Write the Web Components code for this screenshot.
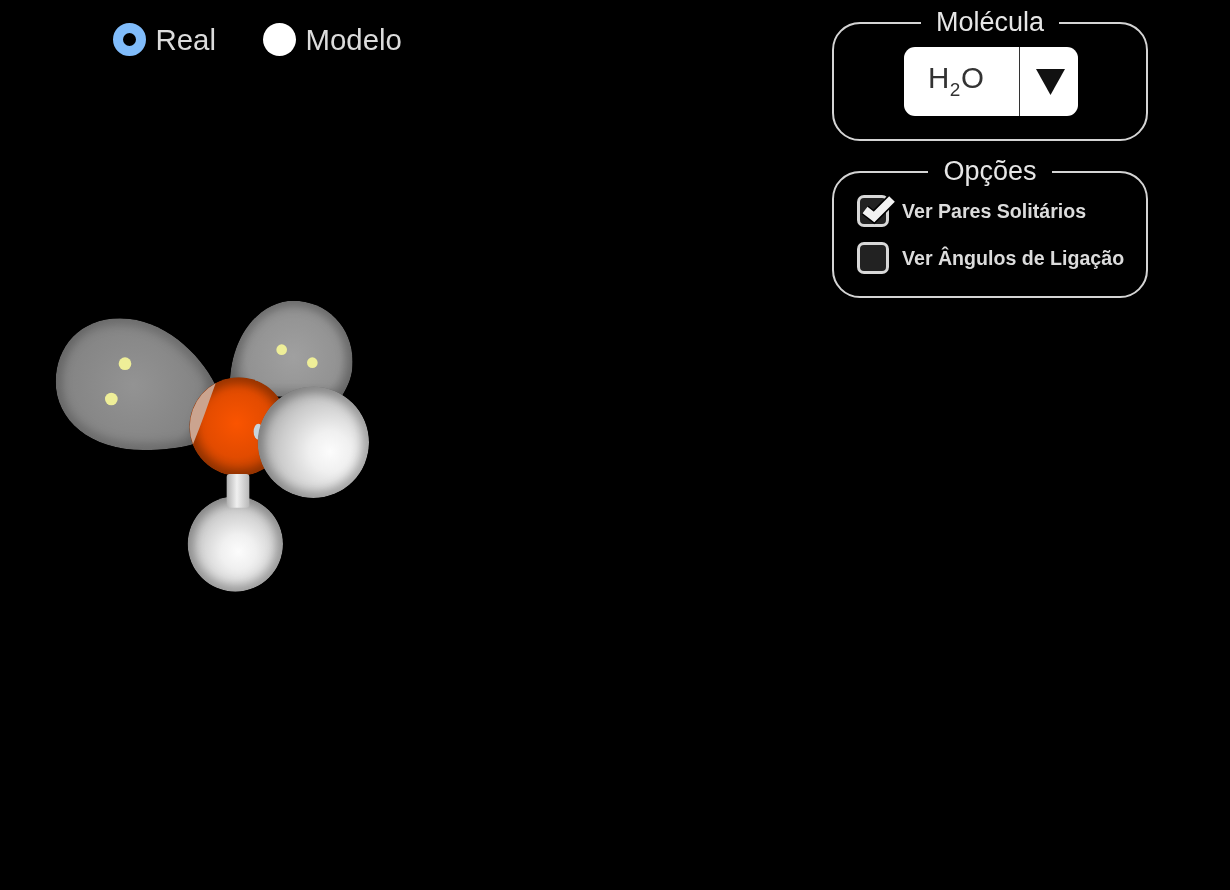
<!DOCTYPE html>
<html lang="pt">
<head>
<meta charset="utf-8">
<title>Geometria Molecular</title>
<style>
  html, body { margin: 0; background: #000; }
  body { font-family: "Liberation Sans", Arial, sans-serif; color: #e6e6e6; }
</style>
</head>
<body>
<mol-app>
  <mol-viewer slot="canvas"></mol-viewer>
  <mol-radio-group slot="top">
    <mol-radio checked>Real</mol-radio>
    <mol-radio>Modelo</mol-radio>
  </mol-radio-group>
  <mol-group slot="panel" label="Molécula" class="first">
    <mol-select></mol-select>
  </mol-group>
  <mol-group slot="panel" label="Opções" class="second">
    <mol-check checked>Ver Pares Solitários</mol-check>
    <mol-check>Ver Ângulos de Ligação</mol-check>
  </mol-group>
</mol-app>
<script>
// página inteira: canvas por baixo, radios em cima e painel à direita
class MolApp extends HTMLElement {
  constructor() {
    super()
    this.attachShadow({ mode: 'open' })
    this.shadowRoot.innerHTML = `
      <style>
        :host { display: block; position: relative; width: 1230px; height: 890px; overflow: hidden; background: #000; }
        .layout { position: relative; display: flex; justify-content: space-between; align-items: flex-start; padding: 8px 82px 0 113px; }
        .top { padding-top: 15px; }
        .panel { display: flex; flex-direction: column; gap: 16px; width: 316px; }
      </style>
      <slot name="canvas"></slot>
      <div class="layout">
        <div class="top"><slot name="top"></slot></div>
        <div class="panel"><slot name="panel"></slot></div>
      </div>
    `
  }
}
class MolRadioGroup extends HTMLElement {
  constructor() {
    super()
    this.attachShadow({ mode: 'open' })
    this.shadowRoot.innerHTML = `
      <style>
        :host { display: flex; gap: 47px; }
      </style>
      <slot></slot>
    `
  }
}
class MolRadio extends HTMLElement {
  constructor() {
    super()
    this.attachShadow({ mode: 'open' })
    this.shadowRoot.innerHTML = `
      <style>
        :host { display: flex; align-items: center; gap: 9.5px; height: 33px; font-size: 29.4px; color: #dcdcdc; filter: blur(.5px); }
        .dot { width: 33px; height: 33px; border-radius: 50%; background: #fff; box-sizing: border-box; }
        :host([checked]) .dot { background: #000; border: 10px solid #80bcfb; }
      </style>
      <span class="dot"></span><slot></slot>
    `
  }
}
// caixa com legenda, igual para Molécula e Opções
class MolGroup extends HTMLElement {
  constructor() {
    super()
    this.attachShadow({ mode: 'open' })
    this.shadowRoot.innerHTML = `
      <style>
        :host { display: block; }
        fieldset { margin: 0; padding: 0; border: 2px solid #d4d4d4; border-radius: 28px; filter: blur(.5px); }
        legend { margin: 0 auto; padding: 0 15px; font-size: 27px; color: #e6e6e6; }
        legend span { display: block; height: 30px; line-height: 28px; }
        :host(.first) .body { height: 101px; display: flex; justify-content: center; align-items: flex-start; padding: 9px 0 0 2px; box-sizing: border-box; }
        :host(.second) .body { display: flex; flex-direction: column; gap: 15px; padding: 8px 0 22px 23px; }
      </style>
      <fieldset>
        <legend><span></span></legend>
        <div class="body"><slot></slot></div>
      </fieldset>
    `
    this.shadowRoot.querySelector('legend span').textContent = this.getAttribute('label')
  }
}
class MolSelect extends HTMLElement {
  constructor() {
    super()
    this.attachShadow({ mode: 'open' })
    this.shadowRoot.innerHTML = `
      <style>
        :host { display: flex; width: 174px; height: 69px; background: #fff; border-radius: 11px; color: #333; }
        .value { width: 116px; border-right: 1.5px solid #333; font-size: 29.5px; display: flex; align-items: center; box-sizing: border-box; padding: 0 0 8px 24px; }
        sub { font-size: 19px; line-height: 0; vertical-align: -8px; margin: 0 .5px; }
        .arrow { flex: 1; display: flex; align-items: center; justify-content: center; padding-left: 2px; }
      </style>
      <div class="value"><span>H<sub>2</sub>O</span></div>
      <div class="arrow">
        <svg width="29" height="26" viewBox="0 0 29 26"><path d="M0 0H29L14.5 26Z" fill="#111"/></svg>
      </div>
    `
  }
}
class MolCheck extends HTMLElement {
  constructor() {
    super()
    this.attachShadow({ mode: 'open' })
    this.shadowRoot.innerHTML = `
      <style>
        :host { display: flex; align-items: center; gap: 13px; height: 32px; font: bold 19.6px "Liberation Sans", Arial, sans-serif; color: #dcdcdc; }
        .box { position: relative; width: 32px; height: 32px; box-sizing: border-box; border: 3px solid #d8d8d8; border-radius: 7px; background: #222; }
        svg { display: none; position: absolute; left: -3px; top: -3px; overflow: visible; }
        :host([checked]) svg { display: block; }
      </style>
      <span class="box">
        <svg width="40" height="32" viewBox="0 0 40 32">
          <path d="M8 15L17 22L35 4" fill="none" stroke="#000" stroke-width="11"/>
          <path d="M8 15L17 22L35 4" fill="none" stroke="#f2f2f2" stroke-width="8"/>
        </svg>
      </span>
      <slot></slot>
    `
  }
}
// forma com preenchimento e borda escura suave por dentro
function shaded(id, shape, fill, rim) {
  return `
    <clipPath id="${id}">${shape}</clipPath>
    <g clip-path="url(#${id})">
      <g fill="${fill}">${shape}</g>
      <g fill="none" stroke="#000" stroke-opacity="${rim}" stroke-width="24" filter="url(#soft)">${shape}</g>
    </g>`
}
// a molécula é desenhada em coordenadas do recorte 3x (1020x930)
class MolViewer extends HTMLElement {
  constructor() {
    super()
    this.attachShadow({ mode: 'open' })
    const lobeR = '<path d="M570 265C580 120 670 32 760 32C860 32 938 110 938 215C938 260 925 285 905 320L620 320Z"/>'
    const lobeL = '<path d="M525 282C478 190 370 85 240 85C120 85 47 170 47 275C47 390 150 480 310 480C370 480 420 475 462 462Z"/>'
    this.shadowRoot.innerHTML = `
      <style>
        :host { position: absolute; left: 40px; top: 290px; width: 340px; height: 310px; }
        svg { display: block; filter: blur(.6px); }
      </style>
      <svg width="340" height="310" viewBox="0 0 1020 930">
        <defs>
          <filter id="soft" x="-20%" y="-20%" width="140%" height="140%"><feGaussianBlur stdDeviation="18"/></filter>
          <radialGradient id="lobeLFill" gradientUnits="userSpaceOnUse" cx="280" cy="285" r="290">
            <stop offset="0" stop-color="#939393"/><stop offset=".7" stop-color="#848484"/><stop offset="1" stop-color="#707070"/>
          </radialGradient>
          <radialGradient id="lobeRFill" gradientUnits="userSpaceOnUse" cx="760" cy="200" r="195">
            <stop offset="0" stop-color="#a0a0a0"/><stop offset=".72" stop-color="#929292"/><stop offset="1" stop-color="#787878"/>
          </radialGradient>
          <radialGradient id="orange" gradientUnits="userSpaceOnUse" cx="590" cy="400" r="155">
            <stop offset="0" stop-color="#fa5400"/><stop offset=".65" stop-color="#e24b00"/><stop offset="1" stop-color="#c04200"/>
          </radialGradient>
          <radialGradient id="hBig" gradientUnits="userSpaceOnUse" cx="870" cy="485" r="220">
            <stop offset="0" stop-color="#fcfcfc"/><stop offset=".28" stop-color="#f0f0f0"/><stop offset=".68" stop-color="#cccccc"/><stop offset="1" stop-color="#a8a8a8"/>
          </radialGradient>
          <radialGradient id="hSmall" gradientUnits="userSpaceOnUse" cx="595" cy="785" r="185">
            <stop offset="0" stop-color="#fcfcfc"/><stop offset=".28" stop-color="#f0f0f0"/><stop offset=".68" stop-color="#cccccc"/><stop offset="1" stop-color="#a8a8a8"/>
          </radialGradient>
          <linearGradient id="bond">
            <stop offset="0" stop-color="#b0b0b0"/><stop offset=".45" stop-color="#f0f0f0"/><stop offset="1" stop-color="#b8b8b8"/>
          </linearGradient>
        </defs>
        ${shaded('clipLobeR', lobeR, 'url(#lobeRFill)', .32)}
        ${shaded('clipLobeL', lobeL, 'url(#lobeLFill)', .32)}
        ${shaded('clipO', '<circle cx="596" cy="410" r="148"/>', 'url(#orange)', .45)}
        <path d="M527 280A148 148 0 0 0 459 463C485 400 505 340 527 280Z" fill="#cba48f"/>
        <ellipse cx="655" cy="425" rx="14" ry="24" fill="#c8d4dc"/>
        ${shaded('clipH1', '<circle cx="820" cy="457" r="167"/>', 'url(#hBig)', .42)}
        ${shaded('clipH2', '<circle cx="586" cy="762" r="143"/>', 'url(#hSmall)', .42)}
        <rect x="560" y="552" width="68" height="101" rx="9" fill="url(#bond)"/>
        <g fill="#eeee98">
          <circle cx="255" cy="221" r="19"/><circle cx="214" cy="327" r="19"/>
          <circle cx="725" cy="179" r="16"/><circle cx="817" cy="218" r="16"/>
        </g>
      </svg>
    `
  }
}
customElements.define('mol-app', MolApp)
customElements.define('mol-radio-group', MolRadioGroup)
customElements.define('mol-radio', MolRadio)
customElements.define('mol-group', MolGroup)
customElements.define('mol-select', MolSelect)
customElements.define('mol-check', MolCheck)
customElements.define('mol-viewer', MolViewer)
</script>
</body>
</html>
